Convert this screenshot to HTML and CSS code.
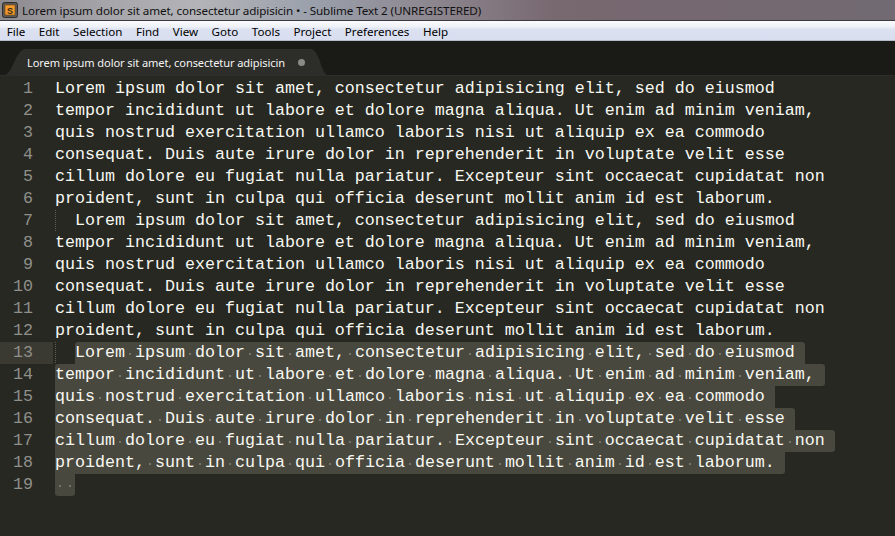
FILE: index.html
```html
<!DOCTYPE html>
<html>
<head>
<meta charset="utf-8">
<link rel="stylesheet" href="styles.css">
</head>
<body>
<div class="window">
  <div class="titlebar">
    <svg class="appicon" width="16" height="16" viewBox="0 0 16 16">
      <rect x="0.5" y="0.5" width="15" height="15" rx="2" fill="#5a5856" stroke="#2e2d2c"/>
      <rect x="3" y="3" width="10" height="10" fill="#f29a2e" stroke="#7a4a10" stroke-width="0.6"/>
      <text x="8" y="11.6" text-anchor="middle" font-family="Liberation Sans, sans-serif" font-size="9" font-weight="bold" fill="#3a2a14">S</text>
    </svg>
    <span class="title">Lorem ipsum dolor sit amet, consectetur adipisicin • - Sublime Text 2 (UNREGISTERED)</span>
  </div>
  <div class="menubar">
    <span class="mi">File</span><span class="mi">Edit</span><span class="mi">Selection</span><span class="mi">Find</span><span class="mi">View</span><span class="mi">Goto</span><span class="mi">Tools</span><span class="mi">Project</span><span class="mi">Preferences</span><span class="mi">Help</span>
  </div>
  <div class="tabbar">
    <div class="tab">
      <span class="tabtitle">Lorem ipsum dolor sit amet, consectetur adipisicin</span>
      <span class="dirty"></span>
    </div>
  </div>
  <div class="editor">
    <div class="gutter">
      <div class="num">1</div><div class="num">2</div><div class="num">3</div><div class="num">4</div><div class="num">5</div><div class="num">6</div><div class="num">7</div><div class="num">8</div><div class="num">9</div><div class="num">10</div><div class="num">11</div><div class="num">12</div><div class="num cur">13</div><div class="num">14</div><div class="num">15</div><div class="num">16</div><div class="num">17</div><div class="num">18</div><div class="num">19</div>
    </div>
    <div class="code">
<div class="ln">Lorem ipsum dolor sit amet, consectetur adipisicing elit, sed do eiusmod</div>
<div class="ln">tempor incididunt ut labore et dolore magna aliqua. Ut enim ad minim veniam,</div>
<div class="ln">quis nostrud exercitation ullamco laboris nisi ut aliquip ex ea commodo</div>
<div class="ln">consequat. Duis aute irure dolor in reprehenderit in voluptate velit esse</div>
<div class="ln">cillum dolore eu fugiat nulla pariatur. Excepteur sint occaecat cupidatat non</div>
<div class="ln">proident, sunt in culpa qui officia deserunt mollit anim id est laborum.</div>
<div class="ln"><span class="ind">  </span>Lorem ipsum dolor sit amet, consectetur adipisicing elit, sed do eiusmod</div>
<div class="ln">tempor incididunt ut labore et dolore magna aliqua. Ut enim ad minim veniam,</div>
<div class="ln">quis nostrud exercitation ullamco laboris nisi ut aliquip ex ea commodo</div>
<div class="ln">consequat. Duis aute irure dolor in reprehenderit in voluptate velit esse</div>
<div class="ln">cillum dolore eu fugiat nulla pariatur. Excepteur sint occaecat cupidatat non</div>
<div class="ln">proident, sunt in culpa qui officia deserunt mollit anim id est laborum.</div>
<div class="ln"><span class="ind">  </span><span class="sel tl tr">Lorem<span class="s"> </span>ipsum<span class="s"> </span>dolor<span class="s"> </span>sit<span class="s"> </span>amet,<span class="s"> </span>consectetur<span class="s"> </span>adipisicing<span class="s"> </span>elit,<span class="s"> </span>sed<span class="s"> </span>do<span class="s"> </span>eiusmod</span></div>
<div class="ln"><span class="sel tl tr br">tempor<span class="s"> </span>incididunt<span class="s"> </span>ut<span class="s"> </span>labore<span class="s"> </span>et<span class="s"> </span>dolore<span class="s"> </span>magna<span class="s"> </span>aliqua.<span class="s"> </span>Ut<span class="s"> </span>enim<span class="s"> </span>ad<span class="s"> </span>minim<span class="s"> </span>veniam,</span></div>
<div class="ln"><span class="sel">quis<span class="s"> </span>nostrud<span class="s"> </span>exercitation<span class="s"> </span>ullamco<span class="s"> </span>laboris<span class="s"> </span>nisi<span class="s"> </span>ut<span class="s"> </span>aliquip<span class="s"> </span>ex<span class="s"> </span>ea<span class="s"> </span>commodo</span></div>
<div class="ln"><span class="sel tr">consequat.<span class="s"> </span>Duis<span class="s"> </span>aute<span class="s"> </span>irure<span class="s"> </span>dolor<span class="s"> </span>in<span class="s"> </span>reprehenderit<span class="s"> </span>in<span class="s"> </span>voluptate<span class="s"> </span>velit<span class="s"> </span>esse</span></div>
<div class="ln"><span class="sel tr br">cillum<span class="s"> </span>dolore<span class="s"> </span>eu<span class="s"> </span>fugiat<span class="s"> </span>nulla<span class="s"> </span>pariatur.<span class="s"> </span>Excepteur<span class="s"> </span>sint<span class="s"> </span>occaecat<span class="s"> </span>cupidatat<span class="s"> </span>non</span></div>
<div class="ln"><span class="sel br">proident,<span class="s"> </span>sunt<span class="s"> </span>in<span class="s"> </span>culpa<span class="s"> </span>qui<span class="s"> </span>officia<span class="s"> </span>deserunt<span class="s"> </span>mollit<span class="s"> </span>anim<span class="s"> </span>id<span class="s"> </span>est<span class="s"> </span>laborum.</span></div>
<div class="ln"><span class="sel last bl br"><span class="s"> </span><span class="s"> </span></span></div>
    </div>
  </div>
</div>
</body>
</html>
```
FILE: styles.css
```css
html, body {
  margin: 0;
  padding: 0;
  background: #272822;
}
.window {
  width: 895px;
  height: 536px;
  overflow: hidden;
  display: flex;
  flex-direction: column;
  background: #272822;
}
.titlebar {
  height: 20px;
  border-bottom: 1px solid #3c3a3e;
  display: flex;
  align-items: center;
  padding-left: 2px;
  background: linear-gradient(90deg, #8c8a8f 0%, #a6a5aa 12%, #b4b4b8 22%, #9aa0ab 35%, #8d8790 48%, #786870 62%, #756870 80%, #716a72 100%);
  font-family: "Noto Sans", "DejaVu Sans", sans-serif;
  font-size: 11.65px;
  color: #111;
}
.appicon {
  flex: none;
  margin-right: 4px;
}
.title {
  white-space: nowrap;
  letter-spacing: -0.1px;
}
.menubar {
  height: 20px;
  border-bottom: 1px solid #b7bccb;
  display: flex;
  align-items: center;
  padding-top: 1px;
  box-sizing: border-box;
  background: linear-gradient(180deg, #fafbfd 0%, #eef1f8 30%, #dce1f1 45%, #d9def0 100%);
  font-family: "Noto Sans", "DejaVu Sans", sans-serif;
  font-size: 11.6px;
  color: #000;
}
.mi {
  padding: 0 6.75px;
  white-space: nowrap;
}
.tabbar {
  height: 34px;
  border-bottom: 1px solid #2d2d29;
  background: #1a1b16;
  display: flex;
  align-items: flex-end;
}
.tab {
  margin-left: 4px;
  width: 324px;
  height: 26px;
  box-sizing: border-box;
  padding-left: 23px;
  display: flex;
  align-items: center;
  background: #2d2d29;
  clip-path: path('M0 26 C9 26 11 0 22 0 L306 0 C316 0 317 26 324 26 Z');
  font-family: "Noto Sans", "DejaVu Sans", sans-serif;
  font-size: 11.1px;
  color: #f4f4f4;
}
.tabtitle {
  white-space: nowrap;
  letter-spacing: -0.1px;
}
.dirty {
  flex: none;
  width: 7px;
  height: 7px;
  border-radius: 50%;
  background: #8a8a86;
  margin-left: 13px;
  margin-top: 1px;
}
.editor {
  flex: 1;
  display: flex;
  padding-top: 2px;
  font-family: "Liberation Mono", monospace;
  font-size: 16.67px;
  line-height: 22px;
}
.gutter {
  width: 53px;
  flex: none;
  color: #8f908a;
}
.num {
  height: 22px;
  text-align: right;
  padding-right: 20px;
}
.num.cur {
  background: #3b3a32;
}
.code {
  margin-left: 2px;
  color: #f8f8f2;
}
.ln {
  height: 22px;
  white-space: pre;
}
.ind {
  display: inline-block;
  height: 22px;
  vertical-align: top;
  background-image: linear-gradient(#5d5d55 50%, transparent 50%);
  background-size: 1px 2px;
  background-repeat: repeat-y;
  background-position: 0 0;
}
.sel {
  display: inline-block;
  height: 22px;
  vertical-align: top;
  background: #49483e;
  padding-right: 10px;
}
.sel.last {
  padding-right: 0;
}
.tl { border-top-left-radius: 3px; }
.tr { border-top-right-radius: 3px; }
.br { border-bottom-right-radius: 3px; }
.bl { border-bottom-left-radius: 3px; }
.s {
  background-image: radial-gradient(circle at center, #75746a 0, #75746a 1px, transparent 1.4px);
  background-repeat: no-repeat;
  background-size: 10px 22px;
  background-position: center 1px;
  display: inline-block;
  height: 22px;
  vertical-align: top;
}
```
